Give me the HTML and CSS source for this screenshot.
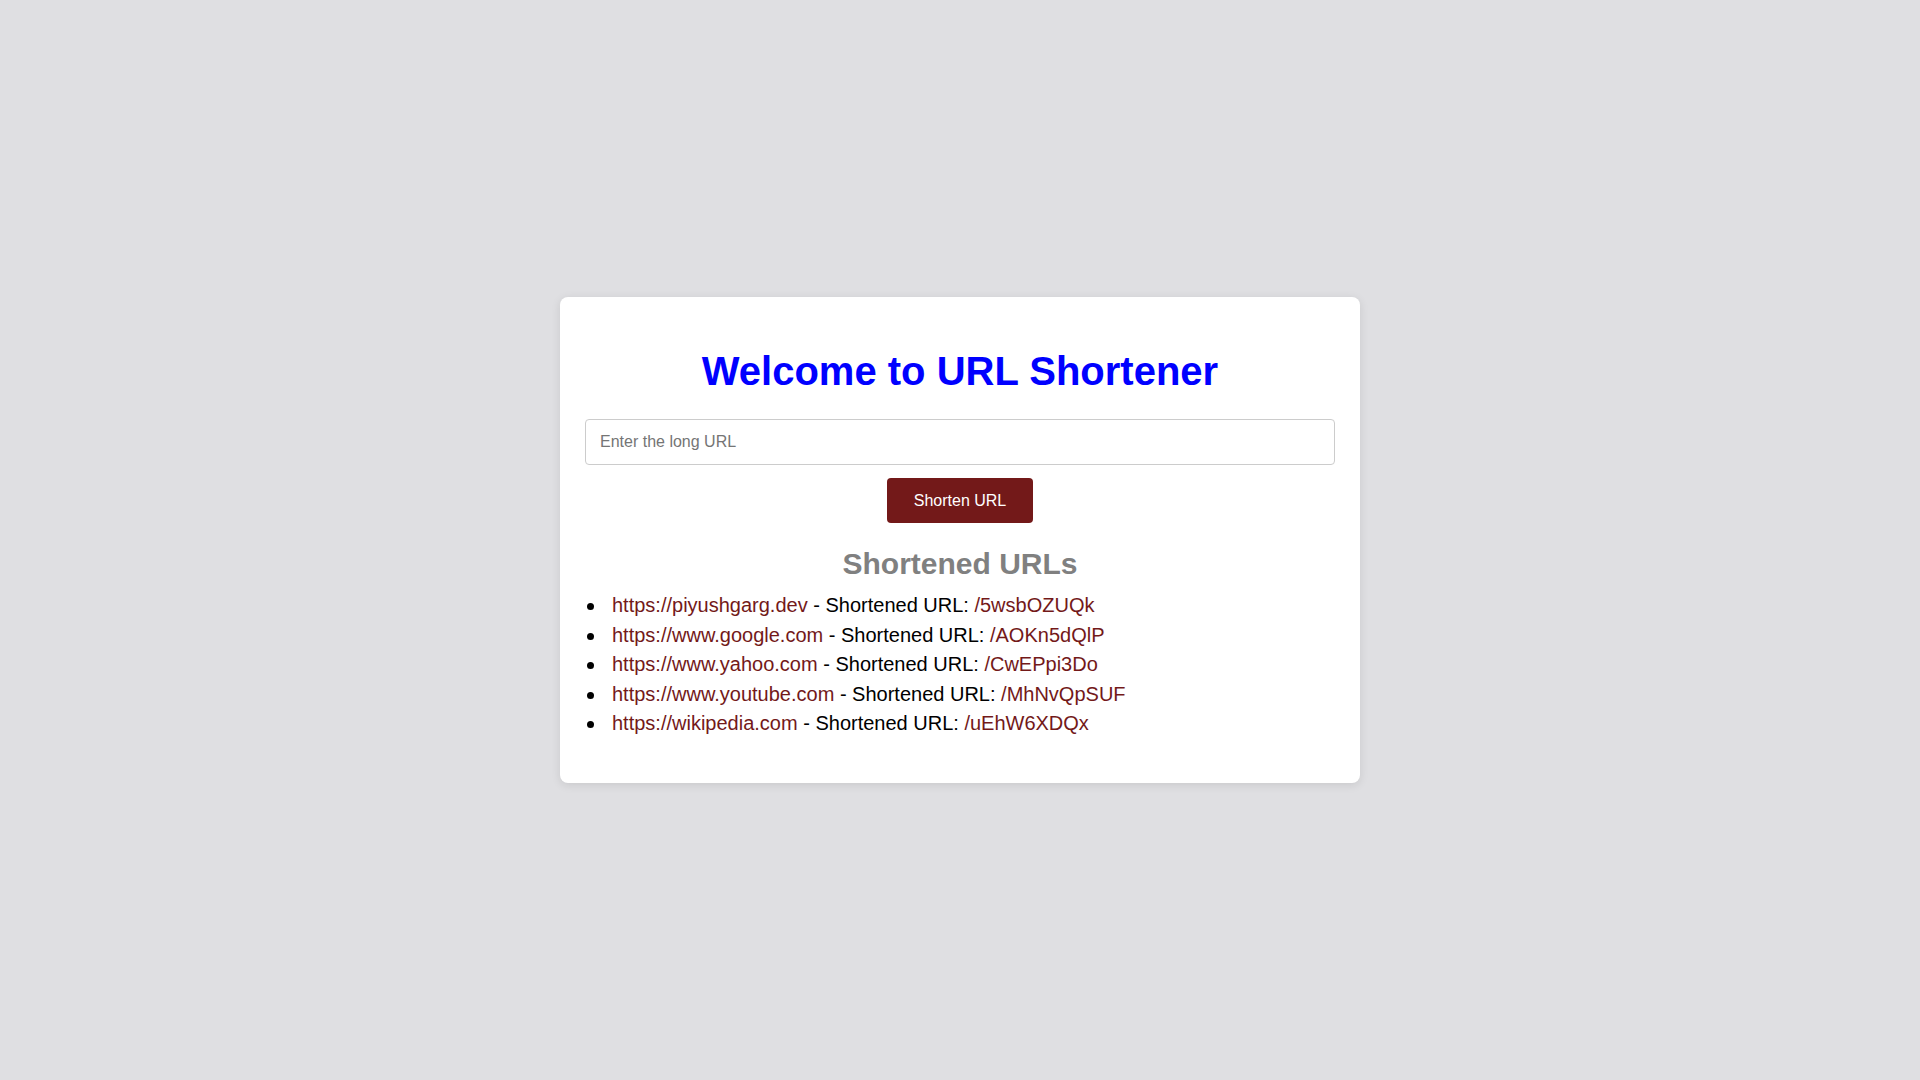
FILE: index.html
```html
<!DOCTYPE html>
<html lang="en">
<head>
<meta charset="utf-8">
<title>URL Shortener</title>
<link rel="stylesheet" href="styles.css">
</head>
<body>
<main class="page">
  <section class="card">
    <h1 class="title">Welcome to URL Shortener</h1>
    <form class="form" onsubmit="return false;">
      <input class="url-input" type="text" placeholder="Enter the long URL">
      <button class="btn" type="submit">Shorten URL</button>
    </form>
    <h2 class="subtitle">Shortened URLs</h2>
    <ul class="url-list">
      <li><a href="#">https://piyushgarg.dev</a> - Shortened URL: <a href="#">/5wsbOZUQk</a></li>
      <li><a href="#">https://www.google.com</a> - Shortened URL: <a href="#">/AOKn5dQlP</a></li>
      <li><a href="#">https://www.yahoo.com</a> - Shortened URL: <a href="#">/CwEPpi3Do</a></li>
      <li><a href="#">https://www.youtube.com</a> - Shortened URL: <a href="#">/MhNvQpSUF</a></li>
      <li><a href="#">https://wikipedia.com</a> - Shortened URL: <a href="#">/uEhW6XDQx</a></li>
    </ul>
  </section>
</main>
</body>
</html>
```
FILE: styles.css
```css
* { box-sizing: border-box; }

html, body {
  margin: 0;
  padding: 0;
  height: 100%;
}

body {
  background: #dfdfe2;
  font-family: "Liberation Sans", Arial, sans-serif;
  color: #000;
}

.page {
  height: 100%;
  display: flex;
  align-items: center;
  justify-content: center;
}

.card {
  width: 800px;
  background: #fff;
  border-radius: 8px;
  box-shadow: 0 2px 10px rgba(0, 0, 0, 0.1);
  padding: 51px 25px 44px;
}

.title {
  margin: 0 0 25px;
  text-align: center;
  color: #0000ff;
  font-size: 40px;
  font-weight: bold;
  line-height: 46px;
}

.form {
  display: flex;
  flex-direction: column;
  align-items: center;
  gap: 13px;
}

.url-input {
  width: 100%;
  height: 46px;
  padding: 0 14px;
  border: 1px solid #cccccc;
  border-radius: 4px;
  font-family: "Liberation Sans", Arial, sans-serif;
  font-size: 16px;
  color: #000;
  outline: none;
}

.url-input::placeholder {
  color: #757575;
}

.btn {
  height: 45px;
  padding: 0 27px;
  border: none;
  border-radius: 4px;
  background: #731919;
  color: #fff;
  font-family: "Liberation Sans", Arial, sans-serif;
  font-size: 16px;
  cursor: pointer;
}

.subtitle {
  margin: 24px 0 10px;
  text-align: center;
  color: #808080;
  font-size: 30px;
  font-weight: bold;
  line-height: 34px;
}

.url-list {
  margin: 0;
  padding-left: 27px;
  list-style: none;
  font-size: 20px;
  line-height: 29.5px;
}

.url-list li::before {
  content: "";
  display: inline-block;
  width: 7px;
  height: 7px;
  border-radius: 50%;
  background: #000;
  margin-left: -25px;
  margin-right: 18px;
  vertical-align: middle;
}

.url-list a {
  color: #731919;
  text-decoration: none;
}
```
